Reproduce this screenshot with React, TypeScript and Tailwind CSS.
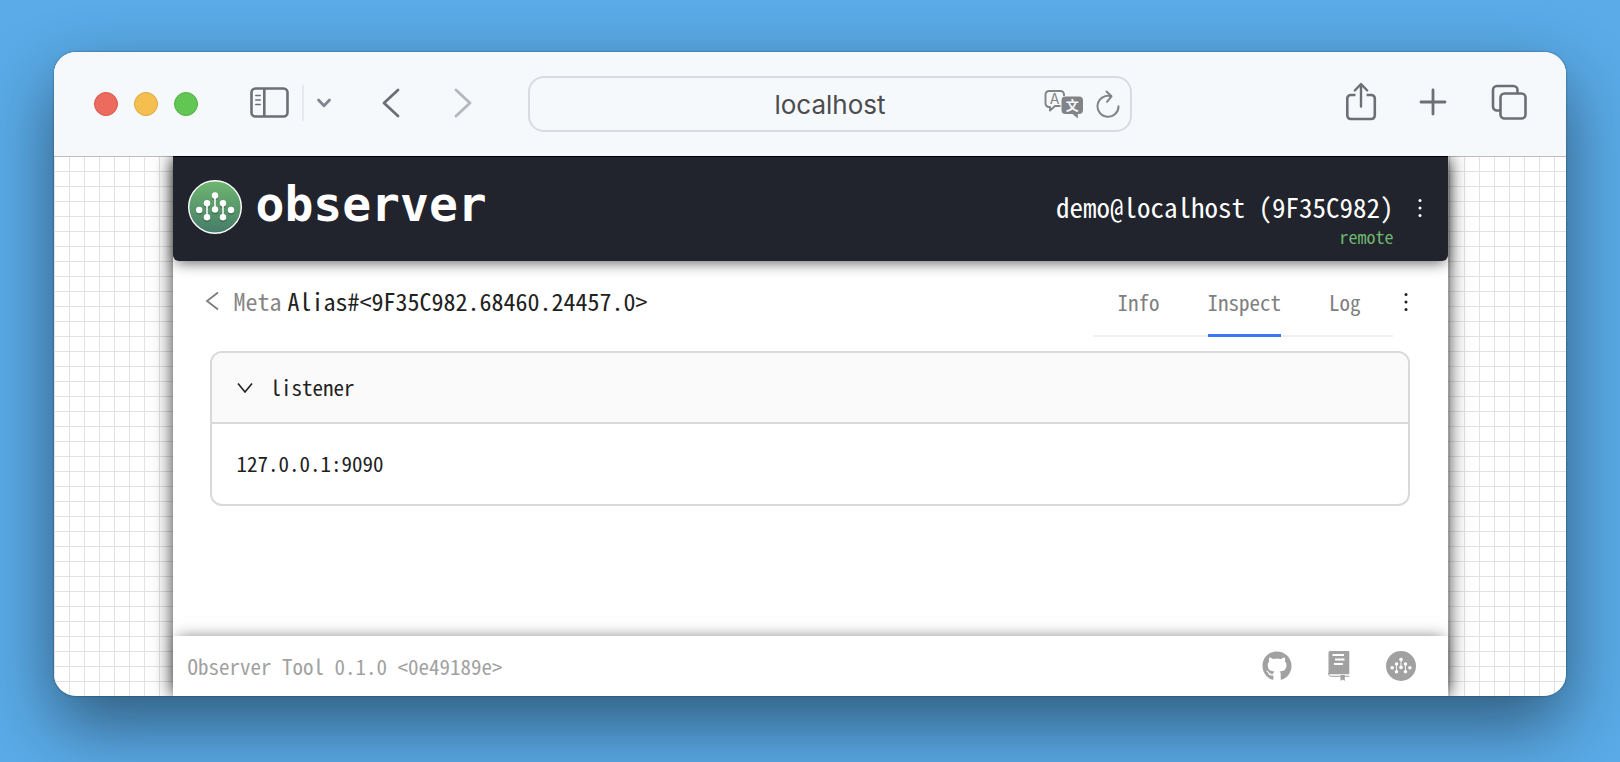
import type { ReactNode } from "react";
import { FaGithub } from "react-icons/fa";

const MONO = "font-['Noto_Sans_Mono_CJK_SC','Noto_Sans_CJK_SC','Liberation_Mono',monospace]";

function IconButton({ label, children, className = "" }: { label: string; children: ReactNode; className?: string }) {
  return (
    <button type="button" aria-label={label} className={`flex shrink-0 items-center justify-center ${className}`}>
      {children}
    </button>
  );
}

function TreeMark() {
  return (
    <g>
      <path d="M19 23v15M27 15v14.500M35 23v15" stroke="#fff" strokeWidth="1.6" />
      <g fill="#fff">
        <circle cx="11.200" cy="30" r="3.200" />
        <circle cx="19" cy="23.300" r="3.200" />
        <circle cx="19" cy="37.300" r="3.200" />
        <circle cx="27" cy="15.500" r="3.200" />
        <circle cx="27" cy="29.500" r="3.200" />
        <circle cx="35" cy="23.300" r="3.200" />
        <circle cx="35" cy="37.300" r="3.200" />
        <circle cx="43" cy="30" r="3.200" />
      </g>
    </g>
  );
}

function Logo() {
  return (
    <svg viewBox="0 0 54 54" className="size-[54px] shrink-0" aria-hidden="true">
      <defs>
        <linearGradient id="logo-fill" x1="0" y1="0" x2="0" y2="1">
          <stop offset="0" stopColor="#6fb670" />
          <stop offset="1" stopColor="#457c68" />
        </linearGradient>
      </defs>
      <circle cx="27" cy="27" r="26.300" fill="url(#logo-fill)" stroke="#fff" strokeWidth="1.400" />
      <g className="opacity-25 brightness-0" transform="translate(0 1.500)">
        <TreeMark />
      </g>
      <TreeMark />
    </svg>
  );
}

function Kebab() {
  return (
    <svg viewBox="0 0 4 20" fill="currentColor" className="h-5 w-1" aria-hidden="true">
      <circle cx="2" cy="2.500" r="1.500" />
      <circle cx="2" cy="10" r="1.500" />
      <circle cx="2" cy="17.500" r="1.500" />
    </svg>
  );
}

function Toolbar() {
  return (
    <div className="grid h-[104px] shrink-0 grid-cols-[434fr_604fr_396fr] items-center bg-[#f5f9fc] pl-10 pr-[38px] text-[#6c6f73]">
      <div className="flex items-center">
        <div className="flex gap-4">
          <button type="button" aria-label="Close window" className="size-6 rounded-full border border-[#d9564c] bg-[#ed6a5f]" />
          <button type="button" aria-label="Minimize window" className="size-6 rounded-full border border-[#dba644] bg-[#f5bf50]" />
          <button type="button" aria-label="Zoom window" className="size-6 rounded-full border border-[#53b044] bg-[#62c655]" />
        </div>
        <div className="flex items-center pb-0.5">
          <IconButton label="Show sidebar" className="ml-[52px]">
            <svg viewBox="0 0 40 32" fill="none" stroke="currentColor" className="h-8 w-10">
              <rect x="1.500" y="1.500" width="36" height="28" rx="4" strokeWidth="2.600" />
              <path d="M14.300 1.500v28" strokeWidth="2.600" />
              <path d="M5.800 8.500h4.400M5.800 13h4.400M5.800 17.500h4.400" strokeWidth="1.600" strokeLinecap="round" />
            </svg>
          </IconButton>
          <span className="ml-3 h-9 w-0.5 bg-[#e6eaee]" />
          <IconButton label="Tab groups" className="ml-3">
            <svg viewBox="0 0 16 12" fill="none" stroke="#81848d" strokeWidth="2.800" strokeLinecap="round" strokeLinejoin="round" className="h-3 w-4">
              <path d="M2.500 3l5.500 5.700L13.500 3" />
            </svg>
          </IconButton>
          <IconButton label="Back" className="ml-[49px]">
            <svg viewBox="0 0 20 30" fill="none" stroke="currentColor" strokeWidth="2.800" strokeLinecap="round" strokeLinejoin="round" className="h-[30px] w-5">
              <path d="M17 2L3 15 17 28" />
            </svg>
          </IconButton>
          <IconButton label="Forward" className="ml-[52px] text-[#b4b7bb]">
            <svg viewBox="0 0 20 30" fill="none" stroke="currentColor" strokeWidth="2.800" strokeLinecap="round" strokeLinejoin="round" className="h-[30px] w-5">
              <path d="M3 2L17 15 3 28" />
            </svg>
          </IconButton>
        </div>
      </div>
      <div className="flex h-14 items-center rounded-2xl border-2 border-[#d8dce0] pl-[86px] pr-2.5">
        <input
          aria-label="Address"
          defaultValue="localhost"
          className="min-w-0 flex-1 bg-transparent pt-0.5 text-center font-['Inter',sans-serif] text-[26px] leading-8 text-[#4c4c4e] outline-none"
        />
        <IconButton label="Translate page">
          <svg viewBox="0 0 40 30" className="h-[30px] w-10 text-[#818386]">
            <path d="M5 2h11.500a3.500 3.500 0 0 1 3.500 3.500V17H11l-5 4.500V18H5a3.500 3.500 0 0 1-3.500-3.500v-9A3.500 3.500 0 0 1 5 2z" fill="none" stroke="currentColor" strokeWidth="1.900" strokeLinejoin="round" />
            <rect x="16.500" y="7" width="23" height="19" rx="4" fill="#f5f9fc" />
            <path d="M21.500 7.500H35a4 4 0 0 1 4 4V21a4 4 0 0 1-4 4h-1.200v4.500L28.500 25h-7a4 4 0 0 1-4-4v-9.500a4 4 0 0 1 4-4z" fill="currentColor" />
            <text x="10.500" y="15" textAnchor="middle" fill="currentColor" className="font-['Inter',sans-serif] text-[14px]">A</text>
            <text x="28.200" y="21" textAnchor="middle" fill="#f5f9fc" className="font-['Noto_Sans_CJK_SC',sans-serif] text-[13px] font-bold">文</text>
          </svg>
        </IconButton>
        <IconButton label="Reload" className="ml-3">
          <svg viewBox="0 0 24 28" fill="none" stroke="#818386" strokeWidth="2" strokeLinecap="round" strokeLinejoin="round" className="h-7 w-6">
            <path d="M22.500 16.200A10.500 10.500 0 1 1 15 6.300" />
            <path d="M10.500 1.500L15.500 6.300 11 11.800" />
          </svg>
        </IconButton>
      </div>
      <div className="flex items-center justify-end pr-px pb-1">
        <IconButton label="Share">
          <svg viewBox="0 0 32 40" fill="none" stroke="currentColor" strokeWidth="2.600" strokeLinecap="round" strokeLinejoin="round" className="h-10 w-8">
            <path d="M10.500 13H5.800a3.500 3.500 0 0 0-3.500 3.500v17A3.500 3.500 0 0 0 5.800 37h20.500a3.500 3.500 0 0 0 3.500-3.500v-17a3.500 3.500 0 0 0-3.500-3.500h-4.700" strokeLinecap="butt" />
            <path d="M16 24.500V3M9.800 8.500L16 2l6.200 6.500" strokeWidth="2.400" />
          </svg>
        </IconButton>
        <IconButton label="New tab" className="ml-[42px]">
          <svg viewBox="0 0 28 28" fill="none" stroke="currentColor" strokeWidth="2.800" strokeLinecap="round" className="size-7">
            <path d="M14 2v24M2 14h24" />
          </svg>
        </IconButton>
        <IconButton label="Tab overview" className="ml-11">
          <svg viewBox="0 0 36 36" fill="none" stroke="currentColor" strokeWidth="2.600" className="size-9">
            <rect x="9.500" y="9.500" width="25" height="25" rx="4" />
            <path d="M9.500 26.500H6a4 4 0 0 1-4-4V6a4 4 0 0 1 4-4h16.500a4 4 0 0 1 4 4v3.500" />
          </svg>
        </IconButton>
      </div>
    </div>
  );
}

function AppHeader() {
  return (
    <header className="relative z-10 flex h-[105px] shrink-0 items-start justify-between rounded-b-md border-t border-black bg-[#21242c] pl-[15px] pr-6 text-white shadow-[0_5px_14px_-3px_rgba(0,0,0,0.6)]">
      <a href="#home" className="flex items-center gap-3.5 pt-[23px]">
        <Logo />
        <span className="pb-1.5 font-['DejaVu_Sans_Mono',monospace] text-5xl leading-[48px] font-bold">observer</span>
      </a>
      <div className="flex gap-[22px] pt-[34px]">
        <div className="text-right">
          <div className="text-[27px] leading-8 font-medium">demo@localhost (9F35C982)</div>
          <div className="text-lg leading-[26px] text-[#6fb670]">remote</div>
        </div>
        <IconButton label="Node menu" className="h-[34px] w-2">
          <Kebab />
        </IconButton>
      </div>
    </header>
  );
}

function Inspector() {
  const tabs = ["Info", "Inspect", "Log"];
  return (
    <main className="flex flex-1 flex-col pr-[38px]">
      <div className="flex justify-between pt-3 pl-8">
        <div className="flex h-14 items-center text-2xl leading-8 font-medium">
          <IconButton label="Back to list" className="mr-[13px] h-8 w-4 text-[#7d7d7d]">
            <svg viewBox="0 0 16 20" fill="none" stroke="currentColor" strokeWidth="1.800" className="h-5 w-4">
              <path d="M13 1.500L2 10l11 8.500" />
            </svg>
          </IconButton>
          <h1 className="flex gap-1.5">
            <span className="text-[#858585]">Meta</span>
            <span>Alias#&lt;9F35C982.68460.24457.0&gt;</span>
          </h1>
        </div>
        <div className="flex items-start gap-[9px]">
          <div role="tablist" className="flex h-16 items-stretch gap-12 border-b-2 border-[#f0f0f0] pl-[25px] pr-8 text-[21px] leading-8 text-[#808080]">
            {tabs.map((tab) => (
              <button
                key={tab}
                type="button"
                role="tab"
                aria-selected={tab === "Inspect"}
                className={`-mb-0.5 border-b-3 pb-1 ${tab === "Inspect" ? "border-[#3b76f6]" : "border-transparent"}`}
              >
                {tab}
              </button>
            ))}
          </div>
          <IconButton label="More actions" className="h-[58px] w-2">
            <Kebab />
          </IconButton>
        </div>
      </div>
      <section className="mt-3.5 ml-[37px] rounded-xl border-2 border-[#d9d9d9] text-[21px] leading-8">
        <button type="button" aria-expanded="true" className="flex h-[71px] w-full items-center gap-[18px] rounded-t-[10px] border-b-2 border-[#d9d9d9] bg-[#fafafa] pb-0.5 pl-[25px]">
          <svg viewBox="0 0 16 12" fill="none" stroke="currentColor" strokeWidth="1.600" className="h-3 w-4" aria-hidden="true">
            <path d="M1 2.500l7 8.500 7-8.500" />
          </svg>
          listener
        </button>
        <p className="px-[25px] pt-[23px] pb-[25px]">127.0.0.1:9090</p>
      </section>
    </main>
  );
}

function AppFooter() {
  return (
    <footer className="relative flex h-[60px] shrink-0 items-center justify-between bg-white pl-[15px] pr-8 text-[#a1a1a1] shadow-[0_-4px_14px_-5px_rgba(0,0,0,0.5)]">
      <p className="text-[21px] leading-8">Observer Tool 0.1.0 &lt;0e49189e&gt;</p>
      <nav aria-label="Links" className="flex items-center gap-9">
        <a href="#source" aria-label="Source code">
          <FaGithub className="size-[30px]" />
        </a>
        <a href="#docs" aria-label="Documentation">
          <svg viewBox="0 0 22 30" className="h-[30px] w-[22px]">
            <path d="M2 0h18.500a.8.8 0 0 1 .8.8V23.200H.5V1.500A1.500 1.500 0 0 1 2 0z" fill="currentColor" />
            <path d="M.5 22c0 2.500 1 3.300 3 3.300h17.800" fill="none" stroke="currentColor" strokeWidth="1" />
            <path d="M12.500 24h4.300v6l-2.100-1.500-2.200 1.500z" fill="currentColor" />
            <path d="M4.500 4h11.500M7 8.500h9.500M6 13h9" stroke="#fff" strokeWidth="1.800" />
          </svg>
        </a>
        <a href="#observer" aria-label="Observer">
          <svg viewBox="0 0 54 54" className="size-[30px]">
            <circle cx="27" cy="27" r="27" fill="currentColor" />
            <TreeMark />
          </svg>
        </a>
      </nav>
    </footer>
  );
}

export default function App() {
  return (
    <div className="flex min-h-screen flex-col overflow-hidden bg-[#5aabe8] px-[54px] pt-[52px] pb-[66px]">
      <div className="flex flex-1 rounded-[22px] shadow-[0_0_2px_rgba(0,0,0,0.5),0_28px_70px_rgba(0,0,0,0.48)]">
        <div className="flex min-w-0 flex-1 flex-col overflow-hidden rounded-[22px] bg-white">
          <Toolbar />
          <div className="flex flex-1 flex-col overflow-hidden bg-[linear-gradient(to_right,#e2e2e2_1px,transparent_1px),linear-gradient(to_bottom,#e2e2e2_1px,transparent_1px)] bg-size-[15px_15px] shadow-[inset_0_1px_0_#bcbfc1]">
            <div className={`mx-auto flex w-full max-w-[1275px] flex-1 flex-col bg-white text-[#212121] shadow-[0_0_18px_rgba(0,0,0,0.8)] ${MONO}`}>
              <AppHeader />
              <Inspector />
              <AppFooter />
            </div>
          </div>
        </div>
      </div>
    </div>
  );
}
